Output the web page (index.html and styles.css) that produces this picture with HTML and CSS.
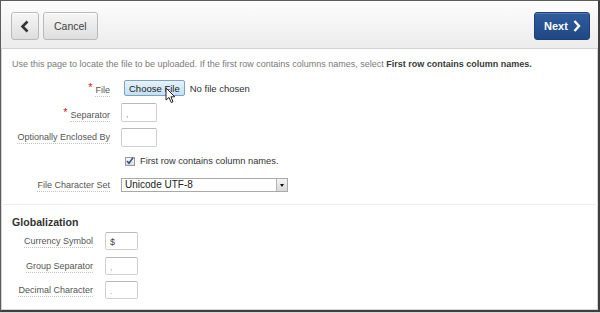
FILE: index.html
```html
<!DOCTYPE html>
<html lang="en">
<head>
    <meta charset="UTF-8">
    <title>Data Load Source</title>
    <link rel="stylesheet" href="styles.css">
</head>
<body>

<div class="frame">
    <div class="toolbar">
        <div class="toolbar-left">
            <button class="btn btn-icon" title="Back">
                <svg width="10" height="13" viewBox="0 0 10 13"><path d="M7.5 1.5 L2.5 6.5 L7.5 11.5" fill="none" stroke="#333" stroke-width="2.6"/></svg>
            </button>
            <button class="btn">Cancel</button>
        </div>
        <button class="btn btn-hot">Next
            <svg width="8" height="12" viewBox="0 0 8 12"><path d="M1.5 1 L6 6 L1.5 11" fill="none" stroke="#fff" stroke-width="2.4"/></svg>
        </button>
    </div>

    <div class="section">
        <p class="help">Use this page to locate the file to be uploaded. If the first row contains columns names, select <b>First row contains column names.</b></p>

        <div class="form">
            <div class="row">
                <label class="lbl"><span class="req">*</span><span class="lbl-text">File</span></label>
                <div class="field file-field">
                    <span class="file-btn">Choose File</span>
                    <span class="file-none">No file chosen</span>
                    <svg class="pointer" width="11" height="17" viewBox="0 0 11 17"><path d="M1 1 L1 13 L4 10.5 L6.2 15.5 L8 14.7 L5.9 9.8 L9.8 9.8 Z" fill="#fff" stroke="#222" stroke-width="1"/></svg>
                </div>
            </div>
            <div class="row row-tall">
                <label class="lbl"><span class="req">*</span><span class="lbl-text">Separator</span></label>
                <div class="field"><span class="text-box">,</span></div>
            </div>
            <div class="row">
                <label class="lbl"><span class="lbl-text">Optionally Enclosed By</span></label>
                <div class="field"><span class="text-box"></span></div>
            </div>
            <div class="row">
                <span class="lbl"></span>
                <div class="field check-field">
                    <span class="check">
                        <svg width="8" height="8" viewBox="0 0 8 8"><path d="M1 4 L3 6.3 L7 0.8" fill="none" stroke="#344f86" stroke-width="1.5"/></svg>
                    </span>
                    <span>First row contains column names.</span>
                </div>
            </div>
            <div class="row row-short">
                <label class="lbl"><span class="lbl-text">File Character Set</span></label>
                <div class="field">
                    <div class="select">
                        <span class="select-value">Unicode UTF-8</span>
                        <span class="select-arrow"></span>
                    </div>
                </div>
            </div>
        </div>
    </div>

    <div class="section section-global">
        <h2>Globalization</h2>
        <div class="form form-small">
            <div class="row">
                <label class="lbl"><span class="lbl-text">Currency Symbol</span></label>
                <div class="field"><span class="text-box small">$</span></div>
            </div>
            <div class="row">
                <label class="lbl"><span class="lbl-text">Group Separator</span></label>
                <div class="field"><span class="text-box small light">,</span></div>
            </div>
            <div class="row">
                <label class="lbl"><span class="lbl-text">Decimal Character</span></label>
                <div class="field"><span class="text-box small light">.</span></div>
            </div>
        </div>
    </div>
</div>

</body>
</html>
```

FILE: styles.css
```css
body {
    margin: 0;
    padding: 0;
    background: #d6d6d6;
    font-family: 'Liberation Sans', Arial, sans-serif;
    color: #555;
}
.frame {
    width: 600px;
    height: 312px;
    box-sizing: border-box;
    background: #fff;
    border-top: 1px solid #5c5c5c;
    border-left: 1px solid #5c5c5c;
    border-right: 2px solid #3f3f3f;
    border-bottom: 2px solid #3f3f3f;
    box-shadow: inset 1px 1px 0 #d4d4d4, inset -1px -1px 0 #d4d4d4;
    overflow: hidden;
}
.toolbar {
    height: 48px;
    box-sizing: border-box;
    padding: 11px 8px 0 10px;
    display: flex;
    justify-content: space-between;
    align-items: flex-start;
    background: linear-gradient(#fdfdfd, #ececec);
    border-bottom: 1px solid #d2d2d2;
}
.toolbar-left {
    display: flex;
    gap: 4px;
}
.btn {
    height: 28px;
    padding: 0 10px;
    border: 1px solid #b9b9b9;
    border-radius: 3px;
    background: linear-gradient(#f6f6f6, #dedede);
    box-shadow: inset 0 1px 0 #fff;
    font-family: 'Liberation Sans', Arial, sans-serif;
    font-size: 10.5px;
    color: #444;
    display: flex;
    align-items: center;
    gap: 5px;
}
.btn-icon {
    width: 28px;
    padding: 0;
    justify-content: center;
}
.btn-hot {
    width: 56px;
    padding: 0 0 0 9px;
    border-color: #1d3f75;
    background: linear-gradient(#305c9e, #1f4784);
    box-shadow: inset 0 1px 0 #4f78b4;
    color: #fff;
    font-weight: bold;
    font-size: 11px;
}
.section {
    padding: 0 11px;
}
.help {
    margin: 9px 0 6px;
    font-size: 9px;
    line-height: 12px;
    color: #7a7a7a;
}
.help b {
    color: #3a3a3a;
}
.form {
    display: flex;
    flex-direction: column;
}
.row {
    height: 24px;
    display: grid;
    grid-template-columns: 98px 1fr;
    column-gap: 11px;
    align-items: center;
}
.row-tall {
    height: 25px;
}
.row-short {
    height: 23px;
}
.form-small .row {
    height: 24.5px;
    grid-template-columns: 81px 1fr;
    column-gap: 12px;
}
.lbl {
    text-align: right;
    font-size: 9px;
    color: #555;
}
.lbl-text {
    border-bottom: 1px dotted #c4c4c4;
    padding-bottom: 1px;
}
.req {
    color: #d42020;
    font-size: 11px;
    margin-right: 3px;
    vertical-align: 2px;
}
.field {
    display: flex;
    align-items: center;
    font-size: 9.3px;
    color: #333;
}
.file-field {
    position: relative;
    padding-left: 3px;
    gap: 5px;
}
.file-btn {
    height: 14px;
    padding: 0 4px;
    display: flex;
    align-items: center;
    border: 1px solid #7aa3c9;
    border-radius: 2px;
    background: linear-gradient(#e6f2fb, #c4dff2);
    color: #222;
    font-size: 9.5px;
}
.file-none {
    font-size: 9.5px;
    color: #333;
}
.pointer {
    position: absolute;
    left: 44px;
    top: 7px;
}
.text-box {
    width: 36px;
    height: 19px;
    box-sizing: border-box;
    padding: 2px 4px 0;
    border: 1px solid #cfcfcf;
    border-top-color: #b9b9b9;
    border-radius: 2px;
    font-size: 9px;
    color: #999;
    display: flex;
    align-items: center;
}
.text-box.small {
    width: 33px;
    height: 18px;
    color: #444;
}
.text-box.light {
    color: #aaa;
}
.check-field {
    gap: 5px;
    padding-left: 4px;
}
.check {
    width: 10px;
    height: 9px;
    box-sizing: border-box;
    border: 1px solid #9a9a9a;
    background: linear-gradient(#fafafa, #dcdcdc);
    display: flex;
    align-items: center;
    justify-content: center;
}
.select {
    width: 167px;
    height: 14px;
    box-sizing: border-box;
    border: 1px solid #a9a9a9;
    display: flex;
    align-items: center;
    justify-content: space-between;
    padding-left: 3px;
    font-size: 10px;
    color: #222;
}
.select-arrow {
    width: 11px;
    height: 12px;
    box-sizing: border-box;
    border-left: 1px solid #b5b5b5;
    background: linear-gradient(#f5f5f5, #d8d8d8);
    position: relative;
}
.select-arrow::after {
    content: '';
    position: absolute;
    left: 3px;
    top: 5px;
    border-left: 2.5px solid transparent;
    border-right: 2.5px solid transparent;
    border-top: 3px solid #111;
}
.section-global {
    margin-top: 8px;
    border-top: 1px solid #ececec;
}
h2 {
    margin: 10px 0 0;
    font-size: 10.6px;
    line-height: 14px;
    color: #333;
}
```
